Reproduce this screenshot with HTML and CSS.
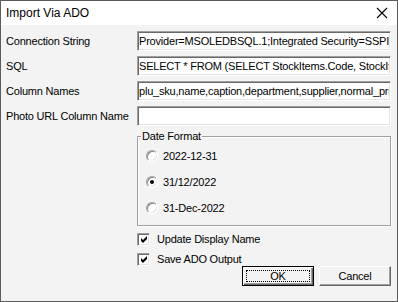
FILE: index.html
```html
<!DOCTYPE html>
<html lang="en">
<head>
    <meta charset="UTF-8">
    <title>Import Via ADO</title>
    <link rel="stylesheet" href="styles.css">
</head>
<body>
    <div class="window">
        <div class="titlebar">
            <span class="title">Import Via ADO</span>
            <svg class="close" width="12" height="12" viewBox="0 0 12 12">
                <path d="M1 1 L11 11 M11 1 L1 11" stroke="#000" stroke-width="1.1" fill="none"/>
            </svg>
        </div>
        <div class="client">
            <div class="fields">
                <label>Connection String</label>
                <input class="edit" type="text" value="Provider=MSOLEDBSQL.1;Integrated Security=SSPI;Persist Security Info=False">
                <label>SQL</label>
                <input class="edit" type="text" value="SELECT * FROM (SELECT StockItems.Code, StockItems.Description">
                <label>Column Names</label>
                <input class="edit" type="text" value="plu_sku,name,caption,department,supplier,normal_price">
                <label>Photo URL Column Name</label>
                <input class="edit" type="text" value="">
            </div>
            <div class="lower">
                <div class="group">
                    <span class="group-title">Date Format</span>
                    <div class="radio-row"><span class="radio"></span>2022-12-31</div>
                    <div class="radio-row"><span class="radio checked"></span>31/12/2022</div>
                    <div class="radio-row"><span class="radio"></span>31-Dec-2022</div>
                </div>
                <div class="check-row first">
                    <span class="check">
                        <svg width="9" height="9" viewBox="0 0 9 9"><polygon points="1,3 3,5 7,1 7,4 3,8 1,6" fill="#000"/></svg>
                    </span>
                    Update Display Name
                </div>
                <div class="check-row">
                    <span class="check">
                        <svg width="9" height="9" viewBox="0 0 9 9"><polygon points="1,3 3,5 7,1 7,4 3,8 1,6" fill="#000"/></svg>
                    </span>
                    Save ADO Output
                </div>
                <div class="buttons">
                    <button class="btn btn-default"><span class="focus">OK</span></button>
                    <button class="btn">Cancel</button>
                </div>
            </div>
        </div>
    </div>
</body>
</html>
```
FILE: styles.css
```css
body {
    margin: 0;
    background: #f3f3f3;
    font-family: "Liberation Sans", Arial, sans-serif;
    font-size: 11px;
    letter-spacing: -0.2px;
    color: #000;
}
.window {
    width: 398px;
    height: 302px;
    box-sizing: border-box;
    border: 1px solid #5b5b5b;
    background: #f3f3f3;
}
.titlebar {
    height: 24px;
    background: #fff;
    display: flex;
    align-items: center;
    justify-content: space-between;
    padding: 0 9px 0 5px;
}
.title {
    font-size: 12px;
    letter-spacing: 0;
}
.close {
    display: block;
}
.client {
    padding: 6px 6px 0 5px;
}
.fields {
    display: grid;
    grid-template-columns: 131px 254px;
    row-gap: 5px;
    align-items: center;
}
.edit {
    height: 20px;
    width: 254px;
    box-sizing: border-box;
    margin: 0;
    padding: 0 1px;
    font-family: inherit;
    font-size: 11px;
    letter-spacing: -0.2px;
    color: #000;
    background: #fff;
    border: 1px solid;
    border-color: #a0a0a0 #fff #fff #a0a0a0;
    box-shadow: inset 1px 1px 0 #696969, inset -1px -1px 0 #e3e3e3;
    outline: none;
}
.lower {
    margin-left: 131px;
    margin-top: 10px;
}
.group {
    position: relative;
    height: 90px;
    box-sizing: border-box;
    border: 1px solid #a0a0a0;
    box-shadow: 1px 1px 0 #fff, inset 1px 1px 0 #fff;
    padding: 11px 0 0 8px;
    display: flex;
    flex-direction: column;
    gap: 10px;
}
.group-title {
    position: absolute;
    top: -7px;
    left: 3px;
    padding: 0 1px;
    background: #f3f3f3;
    line-height: 13px;
}
.radio-row {
    height: 16px;
    display: flex;
    align-items: center;
    gap: 5px;
}
.radio {
    width: 12px;
    height: 12px;
    box-sizing: border-box;
    border-radius: 50%;
    background: #fff;
    border: 1px solid;
    border-color: #a0a0a0 #fff #fff #a0a0a0;
    box-shadow: inset 1px 1px 0 #8a8a8a, inset -1px -1px 0 #e3e3e3;
    position: relative;
}
.radio.checked::after {
    content: "";
    position: absolute;
    left: 3px;
    top: 3px;
    width: 4px;
    height: 4px;
    border-radius: 50%;
    background: #000;
}
.check-row {
    height: 14px;
    display: flex;
    align-items: center;
    gap: 7px;
    margin-top: 6px;
}
.check {
    width: 13px;
    height: 13px;
    box-sizing: border-box;
    background: #fff;
    border: 1px solid;
    border-color: #a0a0a0 #fff #fff #a0a0a0;
    box-shadow: inset 1px 1px 0 #696969, inset -1px -1px 0 #e3e3e3;
    display: flex;
    align-items: center;
    justify-content: center;
}
.check svg {
    display: block;
    margin: 1px 0 0 1px;
}
.buttons {
    display: flex;
    justify-content: flex-end;
    gap: 5px;
}
.btn {
    width: 72px;
    height: 20px;
    box-sizing: border-box;
    margin: 0;
    padding: 0;
    font-family: inherit;
    font-size: 11px;
    letter-spacing: -0.2px;
    color: #000;
    background: #f3f3f3;
    border: 1px solid;
    border-color: #fff #696969 #696969 #fff;
    box-shadow: inset -1px -1px 0 #a0a0a0;
}
.btn-default {
    border-color: #000;
    box-shadow: inset 1px 1px 0 #fff, inset -1px -1px 0 #696969, inset -2px -2px 0 #a0a0a0;
    padding: 3px;
}
.focus {
    display: flex;
    align-items: center;
    justify-content: center;
    height: 100%;
    box-sizing: border-box;
    border: 1px dotted #000;
}
```
